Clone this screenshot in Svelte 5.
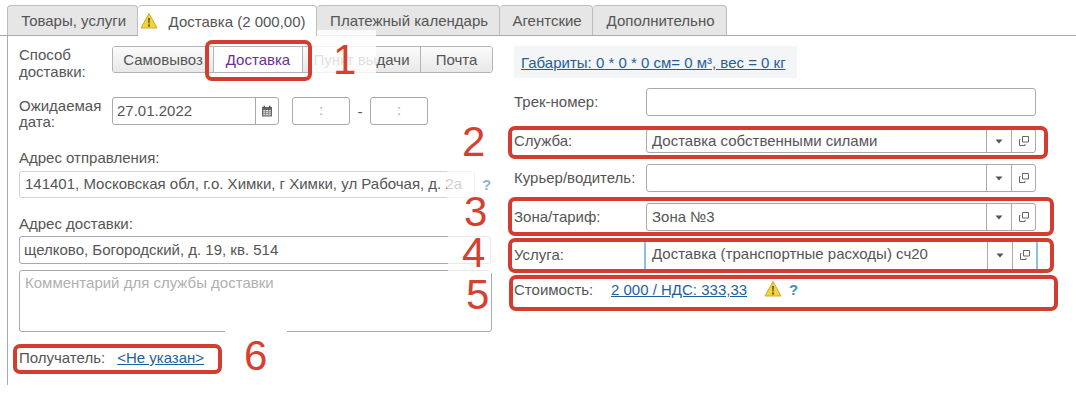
<script lang="ts">
  const tabs = [
    { label: 'Товары, услуги', w: 131 },
    { label: 'Доставка (2 000,00)', w: 179, active: true },
    { label: 'Платежный календарь', w: 183 },
    { label: 'Агентские', w: 93 },
    { label: 'Дополнительно', w: 134 }
  ];
  const methods = [
    { label: 'Самовывоз', w: 101 },
    { label: 'Доставка', w: 89, on: true },
    { label: 'Пункт выдачи', w: 118 },
    { label: 'Почта', w: 71 }
  ];
  // red marks drawn on top of the form: [left, top, width, height]
  const marks = [
    [205, 40, 107, 41],
    [508, 126, 540, 33],
    [508, 197, 546, 39],
    [508, 238, 546, 35],
    [509, 275, 549, 36],
    [13, 344, 209, 30]
  ];
  const digits = [
    ['1', 333, 36],
    ['2', 462, 118],
    ['3', 464, 188],
    ['4', 462, 229],
    ['5', 466, 271],
    ['6', 244, 332]
  ];
  const patches = [
    [308, 30, 68, 48, 0.82],
    [225, 329, 62, 4, 1],
    [447, 171, 28, 27, 0.72],
    [448, 200, 44, 66, 0.75],
    [448, 268, 44, 5, 0.75]
  ];
</script>

{#snippet warn(size)}
  <svg class="warn" width={size} height={size} viewBox="0 0 18 18">
    <path d="M9 1.5 17 16H1Z" fill="#f2d33c" stroke="#c9a92c" stroke-width="1" stroke-linejoin="round" />
    <path d="M8.2 6h1.6l-.3 5.6h-1ZM8.1 12.6h1.8v1.8H8.1Z" fill="#4a4320" />
  </svg>
{/snippet}

{#snippet picker()}
  <span class="cell">
    <svg width="8" height="5" viewBox="0 0 8 5"><path d="M.5.5h7L4 4.5Z" fill="#555" /></svg>
  </span>
  <span class="cell last">
    <svg width="12" height="12" viewBox="0 0 12 12" fill="none" stroke="#666" stroke-width="1">
      <path d="M4.5 1.5h6v5.500h-6Z" />
      <path d="M2.500 4.500H1.500v6h5.500v-1.500" />
    </svg>
  </span>
{/snippet}

<div class="page">
  <nav class="tabs">
    {#each tabs as t}
      <div class="tab" class:active={t.active} style="width:{t.w}px">
        {#if t.active}{@render warn(18)}{/if}
        {t.label}
      </div>
    {/each}
  </nav>

  <div class="body">
    <section class="left">
      <div class="row method">
        <div class="lbl two">Способ<br />доставки:</div>
        <div class="segments">
          {#each methods as m}
            <div class="seg" class:on={m.on} style="width:{m.w}px">{m.label}</div>
          {/each}
        </div>
      </div>

      <div class="row date">
        <div class="lbl tight">Ожидаемая<br />дата:</div>
        <div class="box datebox">
          <span class="val">27.01.2022</span>
          <span class="cell cal">
            <svg width="12" height="12" viewBox="0 0 12 12">
              <path d="M1 2h10v9.500H1Z" fill="#666" />
              <path d="M2.500.8h1.500v2.200H2.500ZM8 .8h1.500v2.200H8Z" fill="#555" />
              <path d="M2.200 5h7.600v5.300H2.200Z" fill="#ddd" />
              <path d="M2 6.700h8M2 8.500h8M4.500 5v5.300M7.500 5v5.300" stroke="#777" stroke-width=".7" />
            </svg>
          </span>
        </div>
        <div class="box time">:</div>
        <span class="dash">-</span>
        <div class="box time">:</div>
      </div>

      <div class="cap from">Адрес отправления:</div>
      <div class="addr">
        <div class="box soft">
          <span class="val clip">141401, Московская обл, г.о. Химки, г Химки, ул Рабочая, д. 2а</span>
        </div>
        <span class="hint">?</span>
      </div>

      <div class="cap to">Адрес доставки:</div>
      <div class="box wide"><span class="val">щелково, Богородский, д. 19, кв. 514</span></div>
      <div class="box comment">Комментарий для службы доставки</div>

      <div class="recipient">
        Получатель:
        <span class="link">&lt;Не указан&gt;</span>
      </div>
    </section>

    <section class="right">
      <div class="dims">
        <span class="link">Габариты: 0 * 0 * 0 см= 0 м³, вес = 0 кг</span>
      </div>

      <div class="frow track">
        <div class="flbl">Трек-номер:</div>
        <div class="box field"></div>
      </div>
      <div class="frow service">
        <div class="flbl">Служба:</div>
        <div class="box field"><span class="val grow">Доставка собственными силами</span>{@render picker()}</div>
      </div>
      <div class="frow courier">
        <div class="flbl">Курьер/водитель:</div>
        <div class="box field"><span class="val grow"></span>{@render picker()}</div>
      </div>
      <div class="frow zone">
        <div class="flbl">Зона/тариф:</div>
        <div class="box field"><span class="val grow">Зона №3</span>{@render picker()}</div>
      </div>
      <div class="frow extra">
        <div class="flbl">Услуга:</div>
        <div class="field bare"><span class="val grow">Доставка (транспортные расходы) сч20</span>{@render picker()}</div>
      </div>
      <div class="cost">
        <span class="costlbl">Стоимость:</span>
        <span class="link">2 000 / НДС: 333,33</span>
        {@render warn(18)}
        <span class="hint strong">?</span>
      </div>
    </section>
  </div>

  {#each patches as [x, y, w, h, o]}
    <div class="patch" style="left:{x}px;top:{y}px;width:{w}px;height:{h}px;opacity:{o}"></div>
  {/each}
  {#each marks as [x, y, w, h]}
    <div class="mark" style="left:{x}px;top:{y}px;width:{w}px;height:{h}px"></div>
  {/each}
  {#each digits as [d, x, y]}
    <div class="digit" style="left:{x}px;top:{y}px">{d}</div>
  {/each}
</div>

<style>
  :global(body) {
    margin: 0;
    background: #fff;
  }
  .page {
    position: relative;
    width: 1076px;
    height: 420px;
    overflow: hidden;
    font-family: 'Liberation Sans', Arial, sans-serif;
    font-size: 15px;
    color: #555;
  }

  .tabs {
    display: flex;
    box-sizing: border-box;
    height: 36px;
    padding: 5px 0 0 7px;
    border-bottom: 1px solid #aaa;
  }
  .tab {
    box-sizing: border-box;
    height: 30px;
    padding-right: 2px;
    display: flex;
    align-items: center;
    justify-content: center;
    gap: 6px;
    background: #e6e6e6;
    border: 1px solid #bdbdbd;
    border-bottom: none;
    border-left: none;
    border-radius: 4px 4px 0 0;
    white-space: pre;
  }
  .tab:first-child {
    border-left: 1px solid #bdbdbd;
  }
  .tab.active {
    background: #fff;
    height: 31px;
    padding-right: 8px;
    position: relative;
    z-index: 1;
  }

  .body {
    display: flex;
  }
  .left {
    box-sizing: border-box;
    width: 500px;
    height: 349px;
    margin-left: 7px;
    padding: 10px 0 0 11px;
    border-left: 1px solid #aaa;
    flex-shrink: 0;
  }
  .row {
    display: flex;
    align-items: flex-start;
  }
  .lbl {
    width: 93px;
    line-height: 17px;
  }
  .two {
    padding-top: 0;
  }
  .tight {
    line-height: 16px;
    margin-top: 1px;
  }
  .segments {
    display: flex;
    height: 27px;
    box-sizing: border-box;
    border: 1px solid #b4b4b4;
    border-radius: 3px;
    overflow: hidden;
  }
  .seg {
    display: flex;
    align-items: center;
    justify-content: center;
    background: linear-gradient(#fbfbfb, #e8e8e8);
    border-right: 1px solid #b4b4b4;
    box-sizing: border-box;
  }
  .seg:last-child {
    border-right: none;
  }
  .seg.on {
    background: #fff;
    color: #6a2f96;
  }
  .date {
    margin-top: 17px;
    align-items: flex-start;
  }
  .box {
    box-sizing: border-box;
    border: 1px solid #a9a9a9;
    border-radius: 3px;
    background: #fff;
  }
  .datebox {
    display: flex;
    width: 167px;
    height: 28px;
  }
  .val {
    display: block;
    line-height: 26px;
    padding-left: 4px;
  }
  .grow {
    flex: 1;
    white-space: nowrap;
  }
  .clip {
    white-space: nowrap;
    overflow: hidden;
  }
  .datebox .val {
    flex: 1;
  }
  .cell {
    width: 24px;
    flex-shrink: 0;
    display: flex;
    align-items: center;
    justify-content: center;
    border-left: 1px solid #a9a9a9;
  }
  .cell.last {
    width: 23px;
  }
  .cal {
    width: 22px;
  }
  .time {
    width: 58px;
    height: 28px;
    margin-left: 13px;
    text-align: center;
    line-height: 24px;
    color: #aaa;
  }
  .dash {
    width: 20px;
    margin-right: -13px;
    text-align: center;
    line-height: 30px;
  }
  .cap {
    line-height: 16px;
  }
  .from {
    margin-top: 20px;
  }
  .addr {
    display: flex;
    margin-top: 5px;
    align-items: center;
  }
  .soft {
    width: 456px;
    height: 27px;
    border-color: #d2d2d2;
    overflow: hidden;
  }
  .soft .val {
    line-height: 24px;
    padding-left: 5px;
  }
  .hint {
    margin-left: 7px;
    color: #8fb4cd;
    font-weight: bold;
  }
  .to {
    margin-top: 18px;
  }
  .wide {
    width: 472px;
    height: 28px;
    margin-top: 4px;
  }
  .comment {
    width: 473px;
    height: 62px;
    margin-top: 6px;
    padding: 4px 5px;
    color: #b0b0b0;
    line-height: 16px;
  }
  .recipient {
    margin-top: 17px;
    line-height: 17px;
    display: flex;
    gap: 12px;
  }
  .link {
    color: #1f5f9a;
    text-decoration: underline;
  }

  .right {
    box-sizing: border-box;
    margin-left: 6px;
    padding-left: 1px;
    padding-top: 10px;
    width: 560px;
  }
  .dims {
    box-sizing: border-box;
    width: 283px;
    height: 32px;
    padding-left: 7px;
    line-height: 33px;
    background: #f3f5f7;
    white-space: nowrap;
  }
  .frow {
    display: flex;
    align-items: center;
  }
  .flbl {
    width: 132px;
    flex-shrink: 0;
    padding-bottom: 2px;
    box-sizing: border-box;
  }
  .field {
    display: flex;
    width: 390px;
  }
  .track {
    margin-top: 10px;
    height: 28px;
  }
  .track .field {
    height: 28px;
  }
  .service {
    margin-top: 13px;
    height: 24px;
  }
  .service .field {
    height: 24px;
  }
  .service .val {
    line-height: 22px;
    padding-left: 5px;
  }
  .courier {
    margin-top: 11px;
    height: 28px;
  }
  .courier .field,
  .zone .field {
    height: 28px;
  }
  .zone .val {
    padding-left: 5px;
  }
  .zone {
    margin-top: 11px;
    height: 28px;
  }
  .extra {
    margin-top: 9px;
    height: 30px;
  }
  .bare {
    box-sizing: border-box;
    height: 30px;
    margin-left: -2px;
    width: 394px;
    padding-left: 2px;
    border-left: 2px solid #8cc0e4;
    border-right: 2px solid #8cc0e4;
  }
  .bare .val {
    line-height: 28px;
  }
  .cost {
    display: flex;
    align-items: center;
    height: 22px;
    margin-top: 8px;
  }
  .costlbl {
    width: 97px;
    flex-shrink: 0;
  }
  .cost .warn {
    margin-left: 17px;
  }
  .strong {
    margin-left: 7px;
    color: #3f8fc4;
  }

  .patch {
    position: absolute;
    background: #fff;
  }
  .mark {
    position: absolute;
    box-sizing: border-box;
    border: 4px solid #d23c31;
    border-radius: 7px;
  }
  .digit {
    position: absolute;
    font-size: 42px;
    line-height: 48px;
    color: #d6402f;
  }
</style>
